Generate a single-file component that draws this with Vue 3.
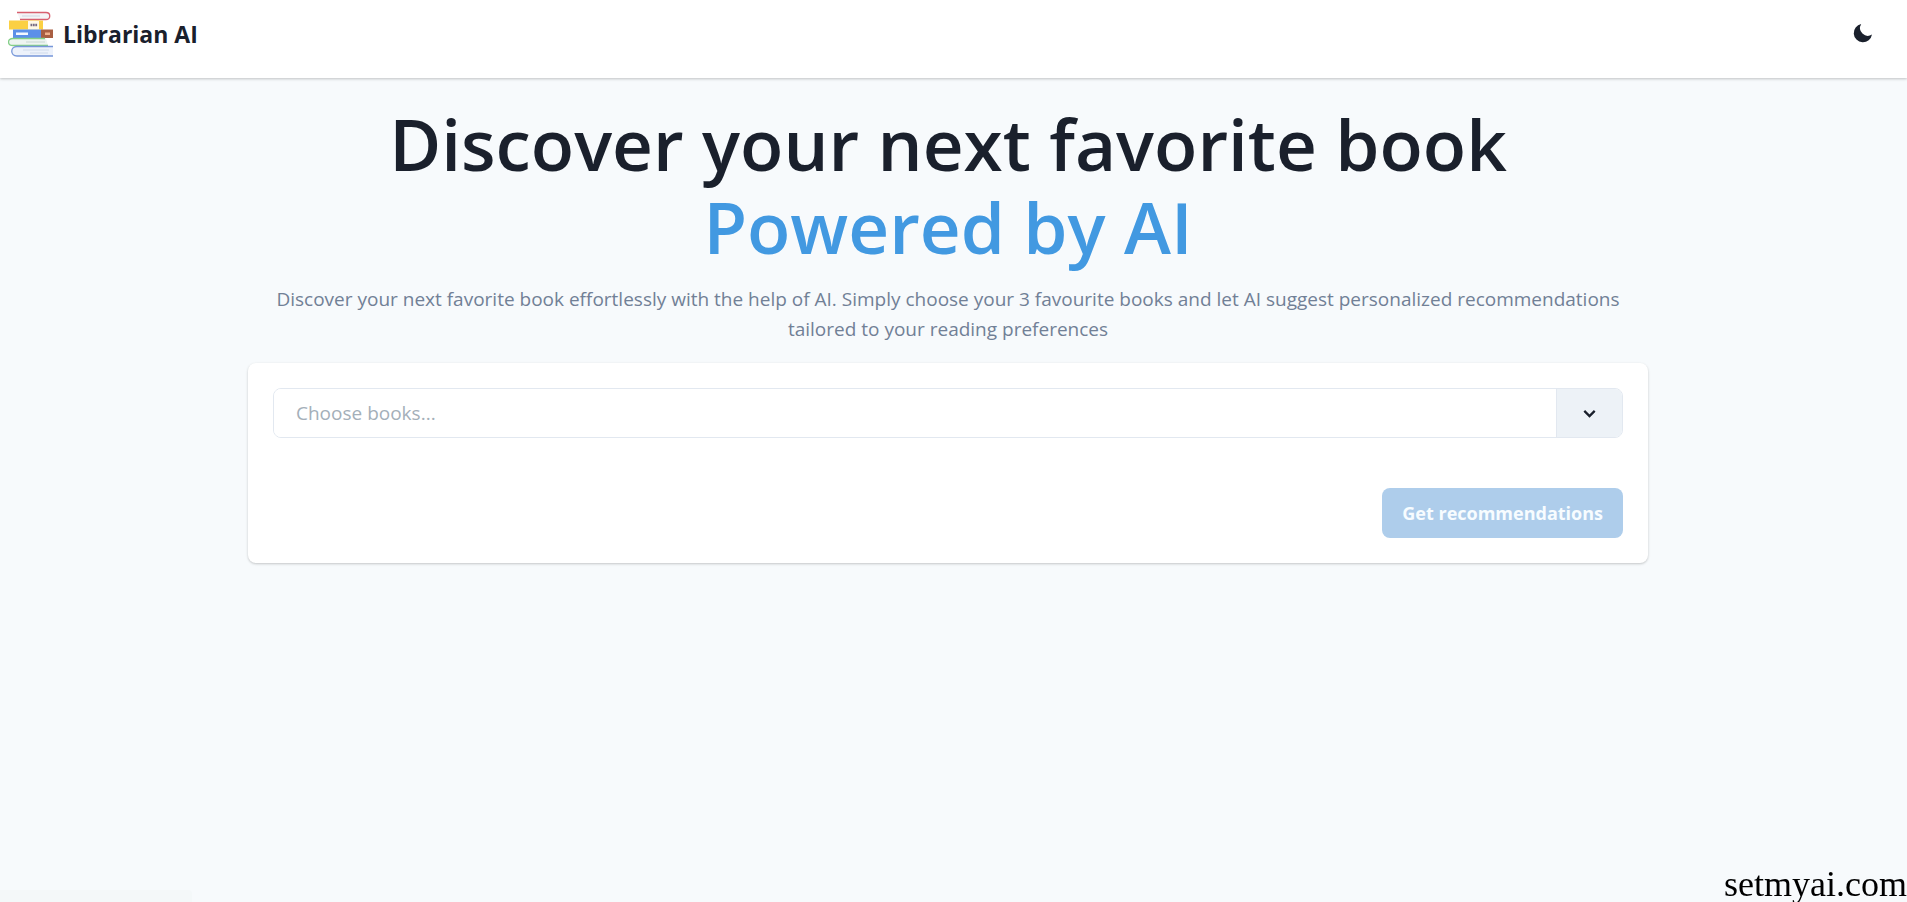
<script setup>
import { ref } from 'vue'

const query = ref('')
</script>

<template>
  <div class="page">
    <header class="navbar">
      <a class="brand" href="#">
        <svg class="logo" viewBox="0 0 46 46" aria-hidden="true">
          <path d="M9 1h28c6 0 6 8 0 8H12z" fill="#f4f4f6" />
          <path d="M9 1.500h29c5 0 5 7 0 7H12" fill="none" stroke="#d8606f" stroke-width="1.3" />
          <path d="M14 5h18" stroke="#d8dbe6" stroke-width="1.2" />
          <path d="M1 9.500h34v9H1z" fill="#fbd043" />
          <path d="M20 10h11v8.500H20z" fill="#fff8e6" />
          <path d="M22.500 14h7" stroke="#776b83" stroke-width="2.4" stroke-dasharray="1.800 .6" />
          <path d="M5 18.500h28v8.500H5z" fill="#5c90e8" />
          <path d="M8 21.500h12v2.500H8z" fill="#f4f8ff" />
          <path d="M33 18.500h12v8.500H33z" fill="#a95f43" />
          <path d="M37 21.500h5v2.500h-5z" fill="#f0b18d" />
          <path d="M38 27.500H5c-6 0-6 7 0 7h35z" fill="#edf4f1" />
          <path d="M37 27.500H5c-6 0-6 7 0 7h35" fill="none" stroke="#83cf87" stroke-width="1.3" />
          <path d="M18 31h19" stroke="#cddbd7" stroke-width="1.2" />
          <path d="M45 35.500H9c-7 0-7 9.500 0 9.500h36z" fill="#edf2fb" />
          <path d="M45 35.500H9c-7 0-7 9.500 0 9.500h36" fill="none" stroke="#7797d9" stroke-width="1.3" />
          <path d="M15 39h26M22 42h18" stroke="#cfd9eb" stroke-width="1.2" />
        </svg>
        <span>Librarian AI</span>
      </a>
      <button class="theme" type="button" aria-label="Switch to dark mode">
        <svg viewBox="0 0 20 20" aria-hidden="true">
          <path d="M8.200 1A9.200 9.200 0 1 0 19 11.600 7.800 7.800 0 0 1 8.200 1z" fill="#1a202c" />
        </svg>
      </button>
    </header>

    <main class="content">
      <h1>
        Discover your next favorite book
        <span>Powered by AI</span>
      </h1>
      <p class="intro">
        Discover your next favorite book effortlessly with the help of AI. Simply choose your 3
        favourite books and let AI suggest personalized recommendations tailored to your reading
        preferences
      </p>
      <form class="card" @submit.prevent>
        <div class="picker">
          <input v-model="query" type="text" aria-label="Choose books" placeholder="Choose books..." />
          <button class="toggle" type="button" aria-label="Show books">
            <svg viewBox="0 0 24 24" aria-hidden="true">
              <path d="M7 9.500l5 5 5-5" fill="none" stroke="#1a202c" stroke-width="2.2" />
            </svg>
          </button>
        </div>
        <button class="submit" type="submit" disabled>Get recommendations</button>
      </form>
    </main>

    <div class="status"></div>
    <footer class="credit">setmyai.com</footer>
  </div>
</template>

<style>
body {
  background: #f7fafc;
}
</style>

<style scoped>
.page {
  box-sizing: border-box;
  min-height: 100vh;
  background: #f7fafc;
  color: #1a202c;
  font-family: "Open Sans", "Noto Sans", sans-serif;
}
.navbar {
  display: flex;
  align-items: flex-start;
  justify-content: space-between;
  box-sizing: border-box;
  height: 78px;
  padding: 10px 24px 0 8px;
  background: #fff;
  box-shadow: 0 1px 3px rgba(0, 0, 0, 0.16), 0 1px 2px rgba(0, 0, 0, 0.08);
}
.brand {
  display: flex;
  align-items: center;
  gap: 9px;
  color: inherit;
  font-size: 23px;
  font-weight: 700;
  line-height: 48px;
  text-decoration: none;
}
.logo {
  width: 46px;
  height: 46px;
}
button {
  font-family: inherit;
}
.theme {
  display: grid;
  place-items: center;
  width: 40px;
  height: 46px;
  padding: 0;
  border: 0;
  background: none;
}
.theme svg {
  width: 20px;
  height: 20px;
}
.content {
  max-width: 1400px;
  margin: 0 auto;
  padding: 24px 11px 0 0;
}
h1 {
  margin: 0;
  font-size: 71px;
  font-weight: 600;
  line-height: 83px;
  text-align: center;
}
h1 span {
  display: block;
  color: #4299e1;
}
.intro {
  margin: 16px 0 19px;
  color: #718096;
  font-size: 19px;
  line-height: 30px;
  text-align: center;
}
.card {
  display: flex;
  flex-direction: column;
  gap: 50px;
  padding: 25px;
  border-radius: 8px;
  background: #fff;
  box-shadow: 0 1px 3px rgba(0, 0, 0, 0.14), 0 1px 2px rgba(0, 0, 0, 0.08);
}
.picker {
  display: flex;
  box-sizing: border-box;
  height: 50px;
  overflow: hidden;
  border: 1px solid #e2e8f0;
  border-radius: 8px;
}
.picker input {
  flex: 1;
  min-width: 0;
  padding: 0 22px;
  border: 0;
  outline: 0;
  background: #fff;
  color: inherit;
  font-family: inherit;
  font-size: 19px;
}
.picker input::placeholder {
  color: #a4afb9;
  opacity: 1;
}
.toggle {
  display: grid;
  place-items: center;
  width: 66px;
  padding: 0;
  border: 0;
  border-left: 1px solid #e2e8f0;
  background: #edf2f7;
}
.toggle svg {
  width: 25px;
  height: 25px;
}
.submit {
  align-self: flex-end;
  height: 50px;
  padding: 0 20px;
  border: 0;
  border-radius: 8px;
  background: #aecdeb;
  color: #f7fcff;
  font-size: 18px;
  font-weight: 700;
}
.status {
  position: fixed;
  bottom: 0;
  left: 0;
  width: 192px;
  height: 12px;
  border-top-right-radius: 4px;
  background: #f4f8f9;
}
.credit {
  position: fixed;
  right: 0;
  bottom: 0;
  color: #000;
  font-family: "Liberation Serif", serif;
  font-size: 36px;
  line-height: 36px;
}
</style>
